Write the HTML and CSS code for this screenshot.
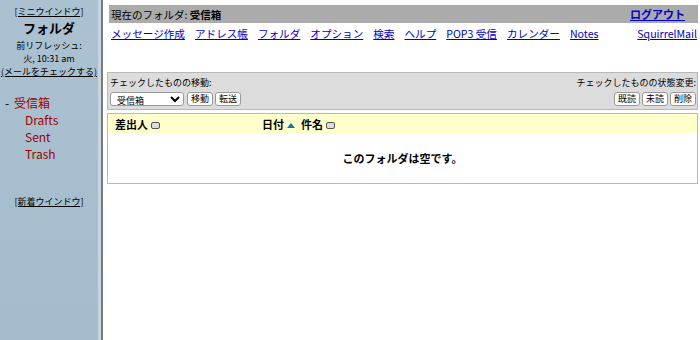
FILE: index.html
```html
<!DOCTYPE html>
<html lang="ja">
<head>
  <meta charset="UTF-8">
  <title>SquirrelMail - 受信箱</title>
  <link rel="stylesheet" href="styles.css">
</head>
<body>
  <div class="page">
    <!-- 左フレーム -->
    <div class="sidebar">
      <div class="side-top">
        <a href="#" class="small-link">[ミニウインドウ]</a>
        <div class="side-title">フォルダ</div>
        <div class="side-info">前リフレッシュ:</div>
        <div class="side-info">火, 10:31 am</div>
        <a href="#" class="small-link">(メールをチェックする)</a>
      </div>
      <ul class="folders">
        <li class="current"><span class="dash">-</span> <a href="#">受信箱</a></li>
        <li><a href="#">Drafts</a></li>
        <li><a href="#">Sent</a></li>
        <li><a href="#">Trash</a></li>
      </ul>
      <div class="side-bottom">
        <a href="#" class="small-link">[新着ウインドウ]</a>
      </div>
    </div>

    <!-- 右フレーム -->
    <div class="main">
      <div class="titlebar">
        <span>現在のフォルダ: <b>受信箱</b></span>
        <a href="#" class="logout">ログアウト</a>
      </div>
      <div class="nav">
        <div class="nav-links">
          <a href="#">メッセージ作成</a>
          <a href="#">アドレス帳</a>
          <a href="#">フォルダ</a>
          <a href="#">オプション</a>
          <a href="#">検索</a>
          <a href="#">ヘルプ</a>
          <a href="#">POP3 受信</a>
          <a href="#">カレンダー</a>
          <a href="#">Notes</a>
        </div>
        <a href="#">SquirrelMail</a>
      </div>

      <div class="actions">
        <div class="act-col">
          <div class="act-label">チェックしたものの移動:</div>
          <div class="act-row">
            <select class="folder-select">
              <option>受信箱</option>
            </select>
            <button class="btn">移動</button>
            <button class="btn">転送</button>
          </div>
        </div>
        <div class="act-col right">
          <div class="act-label">チェックしたものの状態変更:</div>
          <div class="act-row">
            <button class="btn">既読</button>
            <button class="btn">未読</button>
            <button class="btn">削除</button>
          </div>
        </div>
      </div>

      <div class="list">
        <div class="list-head">
          <div class="col-from">差出人 <span class="sort-box"></span></div>
          <div class="col-date">日付 <span class="sort-up"></span></div>
          <div class="col-subj">件名 <span class="sort-box"></span></div>
        </div>
        <div class="empty">このフォルダは空です。</div>
      </div>
    </div>
  </div>
</body>
</html>
```

FILE: styles.css
```css
body {
    margin: 0;
    font-family: "Noto Sans CJK JP", "Noto Sans", sans-serif;
    font-size: 11px;
    color: #000;
    background: #fff;
}

a {
    color: #0000cc;
    white-space: nowrap;
}

.page {
    display: flex;
    height: 340px;
}

/* 左フレーム */
.sidebar {
    width: 98px;
    background: linear-gradient(to bottom, #abc1d2, #a4bccd);
    border-right: 3px solid #c9d5de;
    box-shadow: 2px 0 0 #7a7a7a;
    text-align: center;
    flex-shrink: 0;
    white-space: nowrap;
}

.side-top {
    padding-top: 5px;
    display: flex;
    flex-direction: column;
    align-items: center;
    line-height: 13px;
}

.small-link {
    color: #000;
    font-size: 9px;
}

.side-title {
    font-size: 13px;
    font-weight: bold;
    line-height: 17px;
    margin: 1px 0 3px;
}

.side-info {
    font-size: 9px;
    line-height: 13px;
}

.folders {
    list-style: none;
    margin: 16px 0 0;
    padding: 0;
    text-align: left;
    line-height: 17px;
    font-size: 12px;
}

.folders li {
    padding-left: 25px;
}

.folders li.current {
    padding-left: 5px;
}

.folders a {
    color: #a00000;
    text-decoration: none;
}

.dash {
    margin-right: 2px;
}

.side-bottom {
    margin-top: 30px;
}

/* 右フレーム */
.main {
    flex: 1;
    padding: 5px 2px 0 6px;
    min-width: 0;
}

.titlebar {
    background: #ababab;
    height: 18px;
    margin-left: 2px;
    display: flex;
    justify-content: space-between;
    align-items: center;
    padding: 0 13px 0 2px;
    font-size: 10.5px;
}

.logout {
    font-weight: bold;
    font-size: 11px;
}

.nav {
    display: flex;
    justify-content: space-between;
    margin: 3px 0 0 2px;
    padding: 0 1px 0 2px;
    font-size: 10.6px;
    line-height: 16px;
}

.nav-links {
    display: flex;
    gap: 10px;
}

/* 移動・状態変更 */
.actions {
    margin-top: 30px;
    background: #dcdcdc;
    border: 1px solid #b8b8b8;
    display: flex;
    justify-content: space-between;
    padding: 3px 1px 3px 2px;
    height: 30px;
}

.act-col {
    display: flex;
    flex-direction: column;
}

.act-col.right {
    align-items: flex-end;
}

.act-label {
    font-size: 9px;
    line-height: 13px;
    margin-bottom: 3px;
}

.act-row {
    display: flex;
    gap: 2px;
}

.folder-select {
    width: 74px;
    height: 14px;
    font-size: 9px;
    font-family: inherit;
    padding: 0 2px;
    border: 1px solid #999;
    border-radius: 3px;
    background: #fff;
    margin-right: 1px;
}

.btn {
    height: 14px;
    padding: 0 3px;
    font-size: 9px;
    font-family: inherit;
    line-height: 12px;
    border: 1px solid #999;
    border-radius: 3px;
    background: #fff;
}

/* メッセージ一覧 */
.list {
    margin-top: 3px;
    border: 1px solid #b8b8b8;
    height: 69px;
}

.list-head {
    background: #ffffcc;
    height: 19px;
    display: flex;
    align-items: center;
    font-weight: bold;
    font-size: 11px;
}

.col-from {
    width: 147px;
    padding-left: 7px;
}

.col-date {
    width: 39px;
}

.sort-box {
    display: inline-block;
    width: 7px;
    height: 5px;
    border: 1px solid #555;
    border-radius: 2px;
    background: #ddd;
    vertical-align: middle;
}

.sort-up {
    display: inline-block;
    width: 0;
    height: 0;
    border-left: 4px solid transparent;
    border-right: 4px solid transparent;
    border-bottom: 5px solid #1a6fa8;
    vertical-align: middle;
}

.empty {
    text-align: center;
    font-weight: bold;
    font-size: 11px;
    padding-top: 17px;
}
```
